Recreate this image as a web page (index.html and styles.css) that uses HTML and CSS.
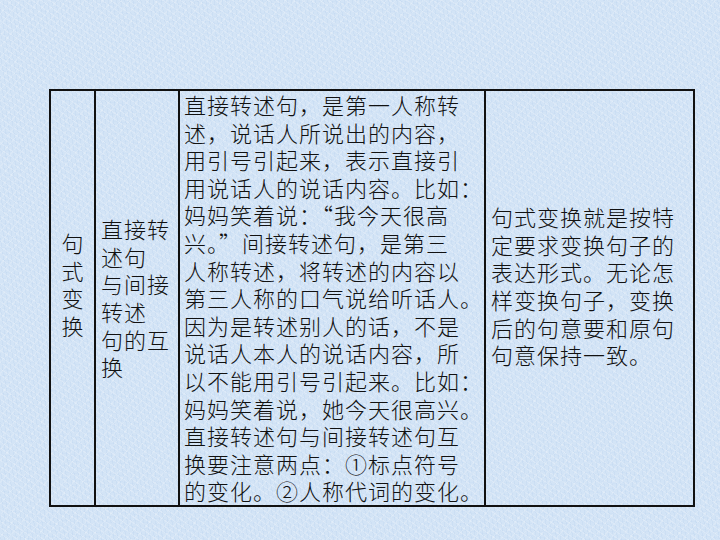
FILE: index.html
```html
<!DOCTYPE html>
<html lang="zh-CN">
<head>
<meta charset="utf-8">
<title>句式变换</title>
<link rel="stylesheet" href="styles.css">
</head>
<body>
<div class="slide">
  <table class="grid">
    <colgroup>
      <col class="w1">
      <col class="w2">
      <col class="w3">
      <col class="w4">
    </colgroup>
    <tr>
      <td class="c1"><div class="vtext">句<br>式<br>变<br>换</div></td>
      <td class="c2">直接转<br>述句<br>与间接<br>转述<br>句的互<br>换</td>
      <td class="c3">直接转述句，是第一人称转<br>述，说话人所说出的内容，<br>用引号引起来，表示直接引<br>用说话人的说话内容。比如：<br>妈妈笑着说：“我今天很高<br>兴。”间接转述句，是第三<br>人称转述，将转述的内容以<br>第三人称的口气说给听话人。<br>因为是转述别人的话，不是<br>说话人本人的说话内容，所<br>以不能用引号引起来。比如：<br>妈妈笑着说，她今天很高兴。<br>直接转述句与间接转述句互<br>换要注意两点：①标点符号<br>的变化。②人称代词的变化。</td>
      <td class="c4"><div class="rtext">句式变换就是按特<br>定要求变换句子的<br>表达形式。无论怎<br>样变换句子，变换<br>后的句意要和原句<br>句意保持一致。</div></td>
    </tr>
  </table>
</div>
</body>
</html>
```

FILE: styles.css
```css
html, body {
  margin: 0;
  padding: 0;
}
body {
  width: 720px;
  height: 540px;
  overflow: hidden;
  background-color: #d3e4f6;
  background-image:
    repeating-linear-gradient(35deg, rgba(255,255,255,0.20) 0 1px, transparent 1px 5px),
    repeating-linear-gradient(-50deg, rgba(255,255,255,0.16) 0 1px, transparent 1px 7px),
    repeating-linear-gradient(80deg, rgba(170,198,232,0.18) 0 1px, transparent 1px 4px),
    repeating-linear-gradient(10deg, rgba(185,210,240,0.15) 0 1px, transparent 1px 6px);
  font-family: "Noto Sans CJK SC", "Noto Sans", sans-serif;
  color: #111;
}
.slide {
  padding: 89px 0 0 49px;
}
.grid {
  border-collapse: collapse;
  table-layout: fixed;
  width: 644px;
  height: 414px;
}
.w1 { width: 45px; }
.w2 { width: 84px; }
.w3 { width: 306px; }
.w4 { width: 209px; }
.grid td {
  border: 2px solid #111;
  padding: 0;
  font-size: 22px;
  font-weight: 300;
  line-height: 27.6px;
  letter-spacing: 1px;
  white-space: nowrap;
  overflow: visible;
}
.c1 {
  text-align: center;
  vertical-align: middle;
}
.grid td.c1 {
  letter-spacing: 0;
}
.vtext {
  padding-bottom: 27px;
}
.grid td.c2 {
  vertical-align: middle;
  padding-left: 5px;
}
.grid td.c3 {
  vertical-align: top;
  padding-left: 4px;
}
.grid td.c4 {
  vertical-align: middle;
  padding-left: 5px;
}
.rtext {
  padding-bottom: 24px;
}
```
